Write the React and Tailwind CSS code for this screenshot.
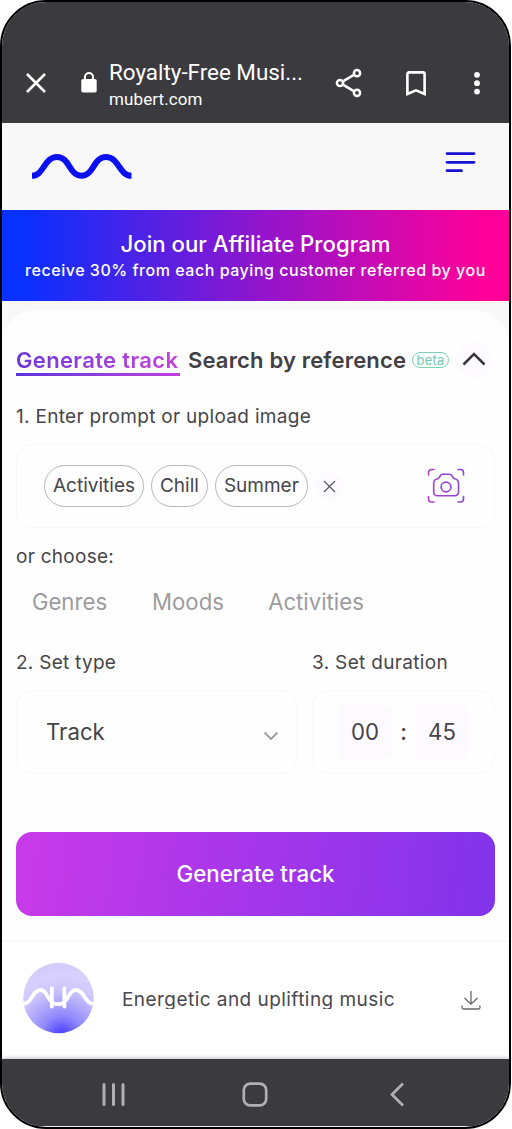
import React, { useState } from 'react';

const tags = ['Activities', 'Chill', 'Summer'];

const categories = [
    { name: 'Genres', box: 'w-[104px] pl-[3px]' },
    { name: 'Moods', box: 'w-[104px]' },
    { name: 'Activities', box: 'w-[124px] pr-[4px]' }
];

const BrowserBar = () => (
    <div className="h-[121px] shrink-0 bg-[#3b3a3f] flex items-end pb-[13px] text-white font-[Roboto,sans-serif]">
        <svg className="ml-[23px] mb-[16px] shrink-0" width="22" height="22" viewBox="0 0 22 22" fill="none" stroke="currentColor" strokeWidth="2.6">
            <path d="M2 2L20 20M20 2L2 20" />
        </svg>
        <svg className="ml-[34px] mb-[17px] shrink-0" width="16" height="21" viewBox="0 0 16 21">
            <rect x="0.3" y="7" width="15.4" height="13.5" rx="1.8" fill="currentColor" />
            <path d="M4 8V5a4 4 0 0 1 8 0v3" fill="none" stroke="currentColor" strokeWidth="2" />
        </svg>
        <div className="ml-[12px] w-[200px] shrink-0 whitespace-nowrap">
            <div className="mb-[2px] text-[22.4px] leading-[28px]">Royalty-Free Musi...</div>
            <div className="text-[17px] leading-[22px] tracking-[0.1px]">mubert.com</div>
        </div>
        <svg className="ml-[26px] mb-[12px] shrink-0" width="28" height="30" viewBox="0 0 28 30" fill="none" stroke="currentColor" strokeWidth="2.5">
            <circle cx="5" cy="15" r="3.1" />
            <circle cx="22" cy="5.2" r="3.1" />
            <circle cx="22" cy="24.8" r="3.1" />
            <path d="M8 13.3L19.2 6.7M8 16.7L19.2 23.3" />
        </svg>
        <svg className="ml-[42px] mb-[13px] shrink-0" width="22" height="28" viewBox="0 0 22 28" fill="none" stroke="currentColor" strokeWidth="2.6">
            <path d="M2.4 25V5a1.6 1.6 0 0 1 1.6-1.6h14A1.6 1.6 0 0 1 19.6 5v20L11 21.3z" />
        </svg>
        <svg className="ml-[46px] mb-[14px] shrink-0" width="8" height="26" viewBox="0 0 8 26" fill="currentColor">
            <circle cx="4" cy="4.8" r="2.9" />
            <circle cx="4" cy="13.2" r="2.9" />
            <circle cx="4" cy="21.6" r="2.9" />
        </svg>
    </div>
);

const SiteHeader = () => (
    <div className="h-[87px] shrink-0 bg-[#f8f8f8] flex items-start justify-between pl-[30px] pr-[33px] text-[#0b10f0]">
        <svg className="mt-[30px]" width="100" height="28" viewBox="0 0 100 28" fill="none" stroke="currentColor" strokeWidth="6">
            <path d="M0 22.8C12 22.8 12 4 25 4S37 22.8 49.5 22.8S61 4 74 4S87 22.8 99.5 22.8" />
        </svg>
        <svg className="mt-[27px]" width="31" height="24" viewBox="0 0 31 24" stroke="#1712cf" strokeWidth="2.8" strokeLinecap="round">
            <path d="M2 3.6H29M2 12.3H29M2 20.7H16.5" />
        </svg>
    </div>
);

const AffiliateBanner = () => (
    <div className="h-[91px] shrink-0 bg-[linear-gradient(90deg,#0830ff_4%,#8c16cf_49%,#ff0099_95%)] flex flex-col items-center pt-[20px] text-white font-medium whitespace-nowrap">
        <div className="text-[22.2px] leading-[28px]">Join our Affiliate Program</div>
        <div className="text-[16px] leading-[24px] tracking-[0.53px]">receive 30% from each paying customer referred by you</div>
    </div>
);

const CameraIcon = () => (
    <svg width="38" height="36" viewBox="0 0 38 36" fill="none" stroke="url(#cam)" strokeWidth="1.6" strokeLinecap="round" strokeLinejoin="round">
        <defs>
            <linearGradient id="cam" x1="0" y1="0" x2="38" y2="0" gradientUnits="userSpaceOnUse">
                <stop stopColor="#a63fd6" />
                <stop offset="1" stopColor="#8a48cf" />
            </linearGradient>
        </defs>
        <path d="M1.5 7V4.5a3 3 0 0 1 3-3H7M31 1.5h2.5a3 3 0 0 1 3 3V7M36.5 28.5V31a3 3 0 0 1-3 3H31M7 34H4.500a3 3 0 0 1-3-3v-2.500" />
        <path d="M13.4 7.500q.7-1.300 2.200-1.300h7q1.500 0 2.200 1.300l1.400 2.300q.5.700 1.400.9 3.900.7 3.900 4.300v9.200a3.500 3.500 0 0 1-3.500 3.500h-17.800a3.500 3.500 0 0 1-3.500-3.500V15q0-3.600 3.900-4.300.9-.2 1.400-.9z" />
        <circle cx="19" cy="19" r="4.900" />
    </svg>
);

const TrackRow = () => (
    <div className="h-[119px] shrink-0 border-t-2 border-[#fafafa] flex items-start pl-[21px]">
        <svg className="mt-[20px] shrink-0" width="71" height="72" viewBox="0 0 71 72">
            <defs>
                <radialGradient id="cover" cx="0.55" cy="1.04" r="1">
                    <stop stopColor="#4236ff" />
                    <stop offset="0.12" stopColor="#6058fd" />
                    <stop offset="0.3" stopColor="#938bfb" />
                    <stop offset="0.5" stopColor="#b3abfb" />
                    <stop offset="0.68" stopColor="#cec7fd" />
                    <stop offset="0.85" stopColor="#d8d0fd" />
                    <stop offset="1" stopColor="#d3cbfb" />
                </radialGradient>
            </defs>
            <circle cx="35.5" cy="36" r="35.300" fill="url(#cover)" />
            <path d="M2 41.500C9 41 9 28 17.500 28C24 28 24 37 28.800 39.500C30 43 40 43 41.400 39.500C46 37 46 28 53 28C61.500 28 61.500 41 69 41.500M28.800 26.500V44.500M41.400 26.500V44.500" fill="none" stroke="#fff" strokeWidth="3.800" strokeLinecap="round" />
        </svg>
        <div className="ml-[28px] mt-[45px] w-[273px] h-[22px] overflow-hidden whitespace-nowrap text-[19px] leading-[26px] tracking-[0.45px] text-[#4a484e]">
            Energetic and uplifting music
        </div>
        <svg className="ml-[66px] mt-[48px] shrink-0" width="20" height="22" viewBox="0 0 20 22" fill="none" stroke="#68666b" strokeWidth="1.300">
            <path d="M10 1v13M3.500 8l6.500 6.200L16.500 8M1 15.500v1.700A1.800 1.800 0 0 0 2.800 19h14.400a1.800 1.800 0 0 0 1.800-1.800v-1.700" />
        </svg>
    </div>
);

const NavigationBar = () => (
    <div className="h-[67px] shrink-0 bg-[#3b3a3f] flex items-start text-[#b0afb3] shadow-[0_-1px_4px_rgba(0,0,0,0.25)]">
        <svg className="ml-[99px] mt-[23px]" width="25" height="25" viewBox="0 0 25 25" stroke="currentColor" strokeWidth="3" strokeLinecap="round">
            <path d="M3 2.500v20M12.500 2.500v20M22 2.500v20" />
        </svg>
        <svg className="ml-[116px] mt-[23px]" width="26" height="25" viewBox="0 0 26 25" fill="none" stroke="currentColor" strokeWidth="2.700">
            <rect x="1.800" y="1.600" width="22.400" height="21.800" rx="6.500" />
        </svg>
        <svg className="ml-[121px] mt-[23px]" width="16" height="25" viewBox="0 0 16 25" fill="none" stroke="currentColor" strokeWidth="2.800">
            <path d="M14 1.500L3 12.500L14 23.500" />
        </svg>
    </div>
);

const App = () => {
    const [tab, setTab] = useState('generate');

    return (
        <div className="w-[511px] h-[1129px] flex flex-col overflow-hidden rounded-[46px] border-2 border-black bg-white font-[Inter,sans-serif] text-[#46454a]">
            <BrowserBar />
            <SiteHeader />
            <AffiliateBanner />

            <main className="h-[639px] shrink-0 bg-[#f8f8f8] pt-[9px]">
                <div className="h-full rounded-t-[34px] bg-[#fefefe] px-[14px] pt-[25px]">
                    {/* Mode tabs */}
                    <div className="h-[50px] flex items-center whitespace-nowrap font-semibold text-[22px] leading-[28px]">
                        <button onClick={() => setTab('generate')} className="relative h-[32px] w-[164px] shrink-0 pb-[1px] text-left tracking-[0.35px]">
                            <span className="bg-linear-to-r from-[#6c35dc] to-[#c640df] bg-clip-text text-transparent">Generate track</span>
                            {tab === 'generate' && <span className="absolute left-0 bottom-0 h-[3px] w-full bg-linear-to-r from-[#5c32dc] to-[#c13fdd]" />}
                        </button>
                        <button onClick={() => setTab('search')} className="ml-[8px] h-[32px] w-[218px] shrink-0 pb-[1px] text-left tracking-[0.17px] text-[#414045]">Search by reference</button>
                        <span className="ml-[6px] h-[16px] w-[37px] shrink-0 flex items-center justify-center rounded-full border border-[#79d2b4] text-[13px] font-normal tracking-[0.2px] text-[#73c9ad]">beta</span>
                        <span className="ml-[7px] size-[36px] shrink-0 flex items-center justify-center rounded-full bg-[#fcfaff]">
                            <svg className="-mt-[3px]" width="24" height="16" viewBox="0 0 24 16" fill="none" stroke="#38363c" strokeWidth="2.500">
                                <path d="M1.500 13.500L12 3L22.500 13.500" />
                            </svg>
                        </span>
                    </div>

                    <div className="mt-[20px] h-6 text-[19px] leading-6 tracking-[0.3px]">1. Enter prompt or upload image</div>
                    <div className="mt-[15px] h-[84px] rounded-[16px] border border-[#f7f7f7] pl-[27px] pr-[29px] flex items-center">
                        <div className="flex gap-[7px]">
                            {tags.map(tag => (
                                <span key={tag} className="h-[42px] px-[8px] flex items-center rounded-full border border-[#b9b9ba] text-[19px]">{tag}</span>
                            ))}
                        </div>
                        <span className="ml-[8px] size-[28px] flex items-center justify-center rounded-full bg-[#fcfaff]">
                            <svg width="13" height="13" viewBox="0 0 13 13" stroke="#5e5c62" strokeWidth="1.300">
                                <path d="M1 1L12 12M12 1L1 12" />
                            </svg>
                        </span>
                        <div className="ml-auto"><CameraIcon /></div>
                    </div>

                    <div className="mt-[17px] h-6 text-[19px] leading-6 tracking-[0.27px]">or choose:</div>
                    <div className="mt-[5px] h-[56px] flex gap-[16px] text-[22.200px] text-[#9c9b9e]">
                        {categories.map(item => (
                            <div key={item.name} className={`${item.box} shrink-0 flex items-center justify-center rounded-[14px] border border-[#fcfcfc]`}>
                                {item.name}
                            </div>
                        ))}
                    </div>

                    <div className="mt-[21px] flex gap-[15px]">
                        <div className="w-[281px]">
                            <div className="h-6 text-[19px] leading-6 tracking-[0.27px]">2. Set type</div>
                            <div className="mt-[15px] h-[84px] rounded-[16px] border border-[#f8f8f8] pl-[29px] pr-[17px] flex items-center justify-between text-[22.200px]">
                                Track
                                <svg className="mt-[8px]" width="16" height="10" viewBox="0 0 16 10" fill="none" stroke="#9b9a9e" strokeWidth="1.800">
                                    <path d="M1.500 1.500L8 8L14.500 1.500" />
                                </svg>
                            </div>
                        </div>
                        <div className="w-[183px]">
                            <div className="h-6 text-[19px] leading-6 tracking-[0.33px]">3. Set duration</div>
                            <div className="mt-[15px] h-[84px] rounded-[16px] border border-[#f8f8f8] pl-[25px] flex items-center text-[22.200px]">
                                <span className="size-[54px] flex items-center justify-center rounded-[6px] bg-[#fcf9ff]">00</span>
                                <span className="w-[23px] text-center font-medium">:</span>
                                <span className="size-[54px] flex items-center justify-center rounded-[6px] bg-[#fcf9ff]">45</span>
                            </div>
                        </div>
                    </div>

                    <button className="mt-[58px] w-full h-[84px] rounded-[16px] bg-[linear-gradient(97deg,#c83ae9,#8133ea)] text-[22.300px] font-medium text-white">
                        Generate track
                    </button>
                </div>
            </main>

            <TrackRow />
            <NavigationBar />
        </div>
    );
};

export default App;
